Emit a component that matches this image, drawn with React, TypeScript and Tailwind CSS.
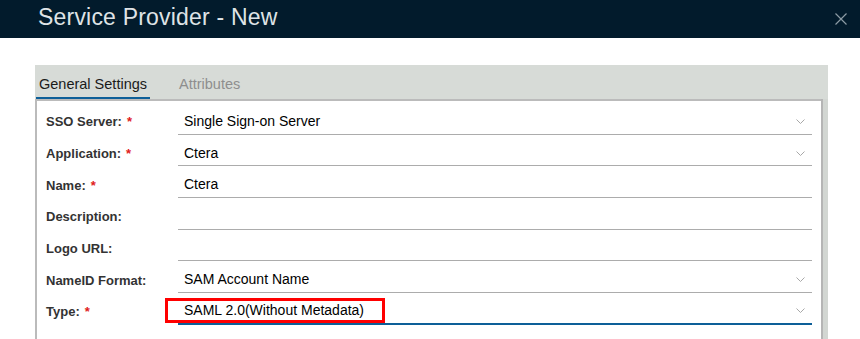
import React from "react";

type Field = {
  label: string;
  value?: string;
  required?: boolean;
  select?: boolean;
};

const FIELDS: Field[] = [
  { label: "SSO Server:", value: "Single Sign-on Server", required: true, select: true },
  { label: "Application:", value: "Ctera", required: true, select: true },
  { label: "Name:", value: "Ctera", required: true },
  { label: "Description:" },
  { label: "Logo URL:" },
  { label: "NameID Format:", value: "SAM Account Name", select: true },
];

function Chevron() {
  return (
    <svg width="9" height="5" viewBox="0 0 9 5" className="shrink-0">
      <polyline points="0.5,0.5 4.5,4.5 8.5,0.5" fill="none" stroke="#a8a8a8" strokeWidth="1" />
    </svg>
  );
}

function Label({ text, required }: { text: string; required?: boolean }) {
  return (
    <div className="flex h-[25px] w-[132px] shrink-0 items-center text-[13px] font-bold text-[#333]">
      {text}
      {required ? <span className="ml-[5px] text-[#e0201a]">*</span> : null}
    </div>
  );
}

export default function App() {
  return (
    <div className="h-[339px] w-[860px] overflow-hidden bg-white font-['Liberation_Sans',Arial,sans-serif]">
      <div className="flex h-[38px] items-center justify-between bg-[#021b2c] pb-[4px] pl-[38px] pr-[13px]">
        <h1 className="text-[23px] font-light leading-none tracking-[0.2px] text-[#dfe3e6]">Service Provider - New</h1>
        <svg width="12" height="12" viewBox="0 0 12 12" className="mt-[4px]">
          <path d="M0.5 0.5 L11.5 11.5 M11.5 0.5 L0.5 11.5" stroke="#8c9ba4" strokeWidth="1.2" />
        </svg>
      </div>

      <div className="pl-[35px] pr-[32px] pt-[27px]">
        <div className="flex h-[34px] items-end bg-[#d7dbd7] text-[14.5px] leading-[16px]">
          <div className="ml-[1px] border-b-2 border-[#0d5f98] pb-[5px] pl-[3px] pr-[3px] text-[#1a1a1a]">
            General Settings
          </div>
          <div className="ml-[26px] pb-[7px] pl-[3px] text-[#8e8e8e]">Attributes</div>
        </div>

        <div className="flex">
          <div className="flex-1 border-l-2 border-t-2 border-[#bbbbbb] pl-[9px] pr-[9px] pt-[2px]">
            {FIELDS.map((f) => (
              <div key={f.label} className="flex h-[31.67px] items-end">
                <Label text={f.label} required={f.required} />
                <div className="flex h-[25px] flex-1 items-center justify-between border-b border-[#acacac] pl-[6px] pr-[7px] text-[14px] text-black">
                  <span>{f.value}</span>
                  {f.select ? <Chevron /> : null}
                </div>
              </div>
            ))}
            <div className="flex h-[31.67px] items-end">
              <Label text="Type:" required />
              <div className="relative flex h-[26px] flex-1 items-center justify-between border-b-2 border-[#0d5f98] pl-[6px] pr-[7px] text-[14px] text-black">
                <span>SAML 2.0(Without Metadata)</span>
                <Chevron />
                <div className="absolute -left-[13px] top-[-1px] h-[25px] w-[220px] border-[3px] border-[#ff0000]" />
              </div>
            </div>
            <div className="h-[20px]" />
          </div>
          <div className="w-[7px] border-l-2 border-[#b5b5b5] bg-[#d2d6d2]" />
        </div>
      </div>
    </div>
  );
}
